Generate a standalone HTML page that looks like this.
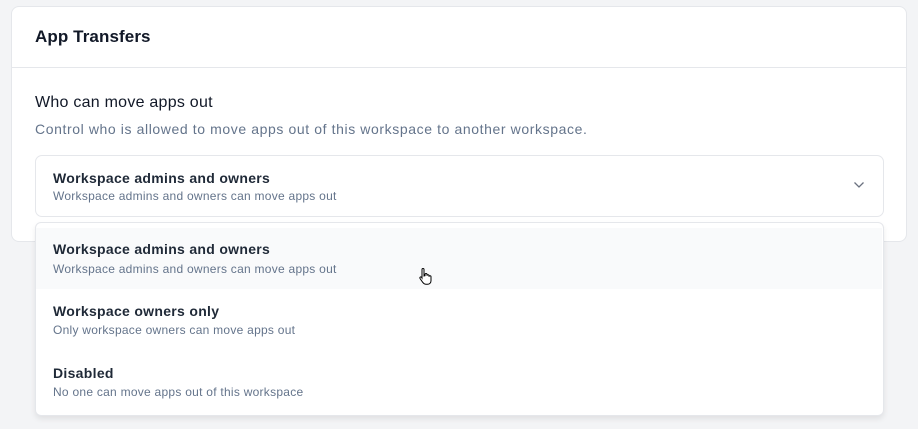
<!DOCTYPE html>
<html><head><style>
*{margin:0;padding:0;box-sizing:border-box}
body{width:918px;height:429px;background:#f3f4f6;font-family:"Liberation Sans",sans-serif;position:relative;overflow:hidden}
.card{position:absolute;left:11px;top:6px;width:896px;height:236px;background:#fff;border:1px solid #e5e7eb;border-radius:8px}
.hd{height:61px;border-bottom:1px solid #e5e7eb;padding:0 0 0 23px}
.hd h1{font-size:17px;font-weight:bold;color:#111827;line-height:60px;letter-spacing:0.1px}
.t{position:absolute;left:23px;top:87px;font-size:16px;color:#111827;letter-spacing:0.25px}
.d{position:absolute;left:23px;top:114px;font-size:14px;color:#64748b;letter-spacing:0.6px}
.sel{position:absolute;left:35px;top:155px;width:849px;height:62px;background:#fff;border:1px solid #e5e7eb;border-radius:7px}
.a{font-size:14px;font-weight:bold;color:#1f2937;position:absolute;left:17px;letter-spacing:0.3px}
.b{font-size:12px;color:#64748b;position:absolute;left:17px;letter-spacing:0.26px}
.dd{position:absolute;left:35px;top:222px;width:849px;height:194px;background:#fff;border:1px solid #e5e7eb;border-radius:6px;box-shadow:0 3px 6px rgba(0,0,0,.08);overflow:hidden}
.o{position:absolute;left:0;width:846px;height:61px}
</style></head><body>
<div class="card"><div class="hd"><h1>App Transfers</h1></div>
<div class="t">Who can move apps out</div>
<div class="d">Control who is allowed to move apps out of this workspace to another workspace.</div></div>
<div class="sel">
<div class="a" style="top:14px">Workspace admins and owners</div>
<div class="b" style="top:33px">Workspace admins and owners can move apps out</div>
<svg style="position:absolute;left:817px;top:25px" width="12" height="8" viewBox="0 0 12 8"><path d="M1.5 1.5l4.5 4.5 4.5-4.5" fill="none" stroke="#6b7280" stroke-width="1.3"/></svg>
</div>
<div class="dd">
<div class="o" style="top:5px;background:#f9fafb">
<div class="a" style="top:13px">Workspace admins and owners</div>
<div class="b" style="top:34px">Workspace admins and owners can move apps out</div></div>
<div class="o" style="top:66px">
<div class="a" style="top:14px">Workspace owners only</div>
<div class="b" style="top:34px">Only workspace owners can move apps out</div></div>
<div class="o" style="top:128px">
<div class="a" style="top:14px">Disabled</div>
<div class="b" style="top:34px">No one can move apps out of this workspace</div></div>
</div>
<svg style="position:absolute;left:417px;top:267px" width="18" height="20" viewBox="0 0 18 20"><path d="M5 2.5a1 1 0 0 1 2 0V9l1-.3V7.5a1 1 0 0 1 2 0v1.3a1 1 0 0 1 2 0v1a1 1 0 0 1 2 0v4c0 2-1.5 3.5-3.5 3.5H9c-1.5 0-2.5-1-3.3-2L3 11.5a1 1 0 0 1 1.5-1.3L5 11z" fill="#fff" stroke="#000" stroke-width="1"/></svg>
</body></html>
